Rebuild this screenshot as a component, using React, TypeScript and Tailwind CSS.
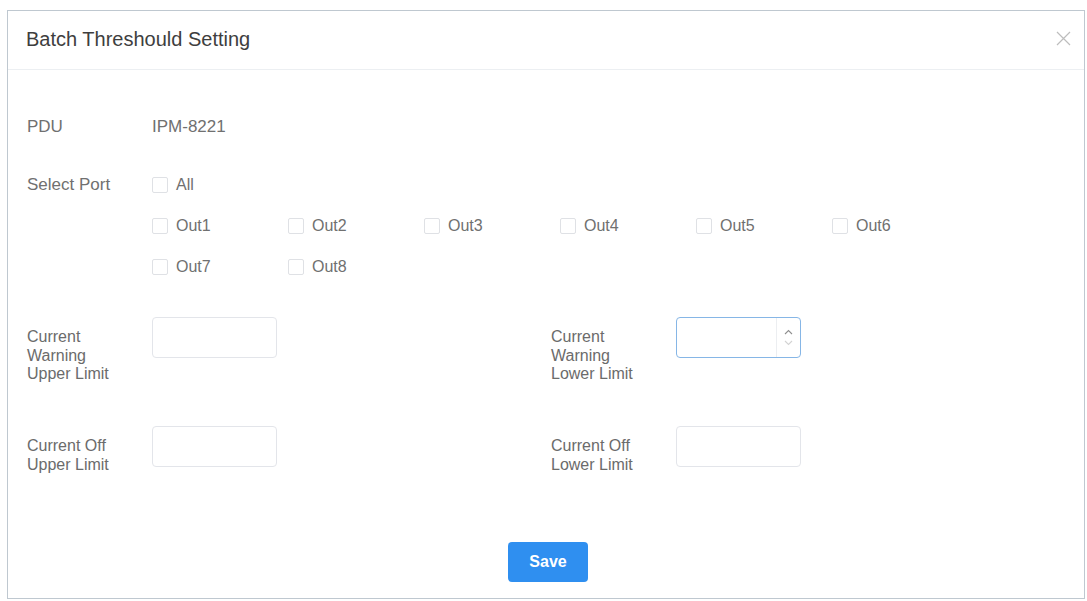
import React from "react";

const ports = ["Out1", "Out2", "Out3", "Out4", "Out5", "Out6", "Out7", "Out8"];

function Box() {
  return <span className="inline-block w-[16px] h-[16px] border border-[#dfe1e5] rounded-[2px] bg-white" />;
}

function Check({ label }: { label: string }) {
  return (
    <label className="flex items-center gap-[8px] text-[16px] text-[#707070] h-[20px]">
      <Box />
      <span>{label}</span>
    </label>
  );
}

function Field({ lines, focused }: { lines: string[]; focused?: boolean }) {
  return (
    <div className="flex items-start h-[41px]">
      <div className="w-[127px] pt-[11px] pl-[2px] text-[16px] leading-[18.5px] text-[#6b6b6b]">
        {lines.map((l, i) => (
          <React.Fragment key={l}>
            {i > 0 && <br />}
            {l}
          </React.Fragment>
        ))}
      </div>
      {focused ? (
        <div className="w-[125px] h-[41px] border border-[#86b6e6] rounded-[4px] bg-white flex">
          <div className="flex-1" />
          <div className="w-[24px] border-l border-[#eceef1] flex flex-col items-center justify-center">
            <svg width="9" height="6" viewBox="0 0 9 6" className="mb-[5px]">
              <path d="M1 5 L4.5 1.5 L8 5" stroke="#8f8f8f" strokeWidth="1.1" fill="none" />
            </svg>
            <svg width="9" height="6" viewBox="0 0 9 6">
              <path d="M1 1 L4.5 4.5 L8 1" stroke="#d3d3d3" strokeWidth="1.1" fill="none" />
            </svg>
          </div>
        </div>
      ) : (
        <div className="w-[125px] h-[41px] border border-[#e3e5ea] rounded-[4px] bg-white" />
      )}
    </div>
  );
}

export default function App() {
  return (
    <div
      className="w-[1087px] h-[601px] bg-white pt-[10px] pl-[7px]"
      style={{ fontFamily: '"Liberation Sans", Arial, sans-serif' }}
    >
      <div className="w-[1078px] h-[589px] border border-[#bfc8d0] bg-white flex flex-col">
        <div className="h-[59px] border-b border-[#eceff2] flex items-center justify-between pl-[18px] pr-[13px]">
          <span className="text-[20px] text-[#3e3e3e] pb-[2px]">Batch Threshould Setting</span>
          <svg width="15" height="15" viewBox="0 0 15 15" className="mb-[4px]">
            <path d="M1 1 L14 14 M14 1 L1 14" stroke="#bdbdbd" strokeWidth="1.2" />
          </svg>
        </div>
        <div className="flex-1 pl-[17px] pt-[47px] flex flex-col">
          <div className="flex items-center text-[17px] text-[#707070] h-[20px]">
            <span className="w-[127px] pl-[2px]">PDU</span>
            <span>IPM-8221</span>
          </div>
          <div className="flex mt-[38px]">
            <span className="w-[127px] pl-[2px] text-[17px] text-[#707070] h-[20px] leading-[20px]">Select Port</span>
            <div className="flex flex-col gap-[21px]">
              <Check label="All" />
              <div className="grid grid-cols-[repeat(6,136px)] gap-y-[21px]">
                {ports.map((p) => (
                  <Check key={p} label={p} />
                ))}
              </div>
            </div>
          </div>
          <div className="grid grid-cols-[524px_1fr] mt-[40px] gap-y-[68px]">
            <Field lines={["Current", "Warning", "Upper Limit"]} />
            <Field lines={["Current", "Warning", "Lower Limit"]} focused />
            <Field lines={["Current Off", "Upper Limit"]} />
            <Field lines={["Current Off", "Lower Limit"]} />
          </div>
          <div className="flex justify-center mt-[75px] pr-[13px]">
            <button className="w-[80px] h-[40px] rounded-[4px] bg-[#2f8ff0] text-white text-[16px] font-bold">
              Save
            </button>
          </div>
        </div>
      </div>
    </div>
  );
}
